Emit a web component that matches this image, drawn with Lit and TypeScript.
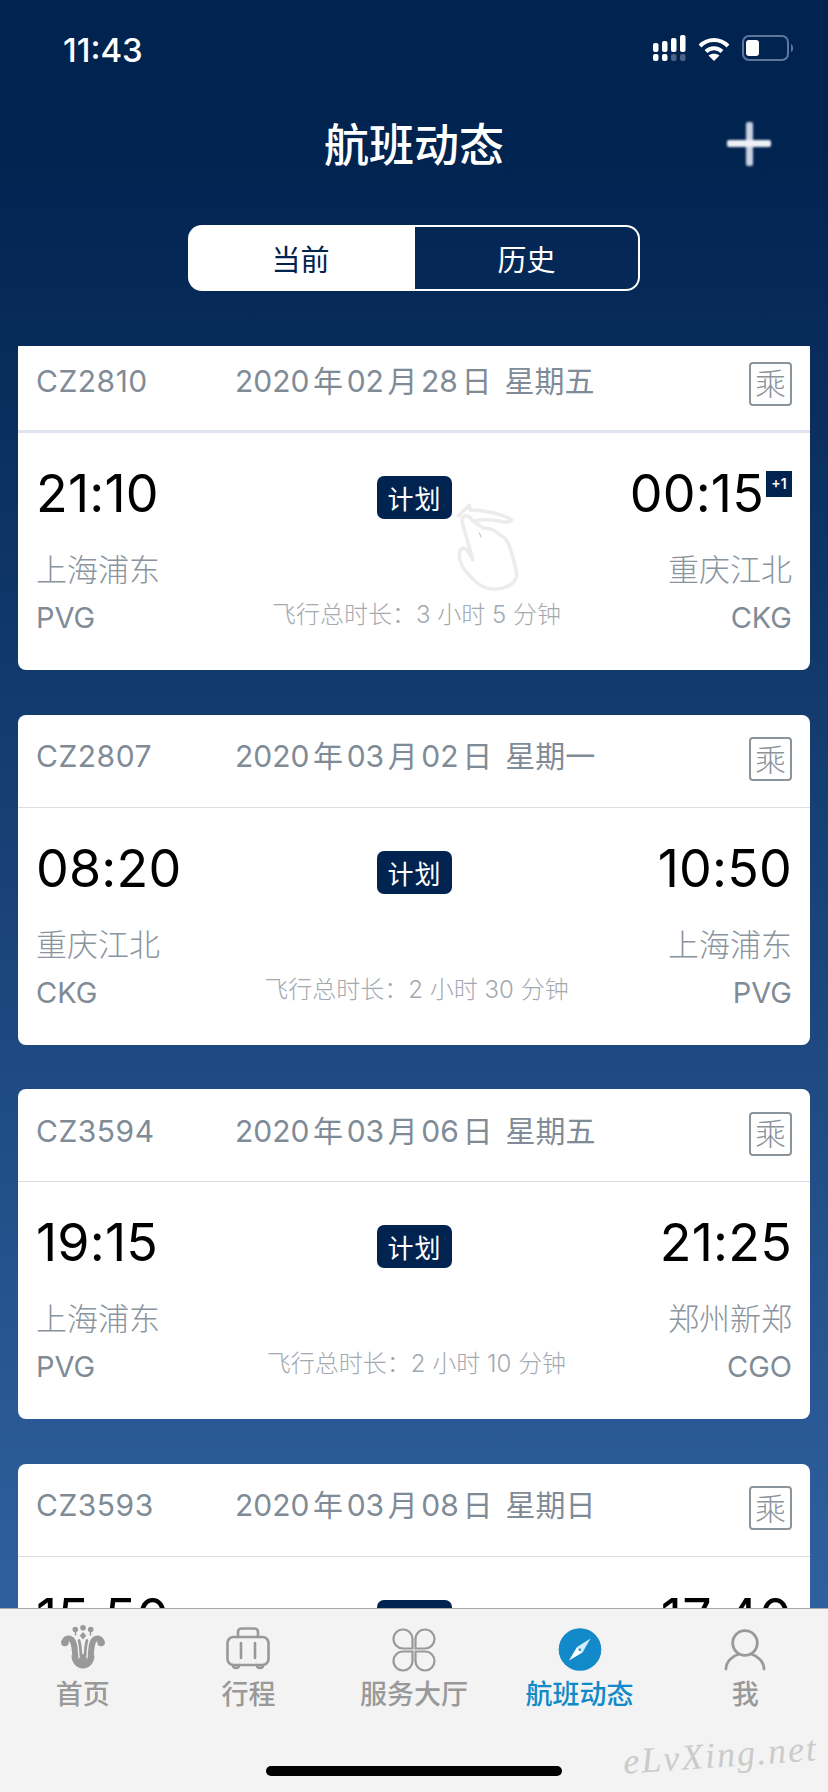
import { LitElement, html, css, svg } from "lit";
import { customElement } from "lit/decorators.js";

interface Flight {
  no: string; y: string; m: string; d: string; wk: string;
  dep: string; arr: string; from: string; fromCode: string; to: string; toCode: string;
  h: string; min: string; plus?: boolean;
}
const flights: Flight[] = [
  { no: "CZ2810", y: "2020", m: "02", d: "28", wk: "星期五", dep: "21:10", arr: "00:15", from: "上海浦东", fromCode: "PVG", to: "重庆江北", toCode: "CKG", h: "3", min: "5", plus: true },
  { no: "CZ2807", y: "2020", m: "03", d: "02", wk: "星期一", dep: "08:20", arr: "10:50", from: "重庆江北", fromCode: "CKG", to: "上海浦东", toCode: "PVG", h: "2", min: "30" },
  { no: "CZ3594", y: "2020", m: "03", d: "06", wk: "星期五", dep: "19:15", arr: "21:25", from: "上海浦东", fromCode: "PVG", to: "郑州新郑", toCode: "CGO", h: "2", min: "10" },
  { no: "CZ3593", y: "2020", m: "03", d: "08", wk: "星期日", dep: "15:50", arr: "17:40", from: "郑州新郑", fromCode: "CGO", to: "上海浦东", toCode: "PVG", h: "2", min: "10" },
];

const tabIcons = {
  home: svg`<svg viewBox="0 3 44 44" width="44" height="44" fill="#999">
    <circle cx="14.300" cy="4.500" r="2.800"/><circle cx="22" cy="2.700" r="2.800"/><circle cx="29.700" cy="4.500" r="2.800"/>
    <path d="M22 7l3.300 3.800-3.300 3.800-3.300-3.800z"/>
    <g fill="none" stroke="#999" stroke-linecap="round">
      <path d="M14.500 6V10M29.500 6V10" stroke-width="1.500"/>
      <path d="M4 17C4 13.500 8 12.500 10.500 14.500 14 17.500 13.500 25 14.500 33" stroke-width="6"/>
      <path d="M40 17C40 13.500 36 12.500 33.500 14.500 30 17.500 30.500 25 29.500 33" stroke-width="6"/>
      <path d="M18 15.500C19.500 20 19.500 26 20 31M26 15.500C24.500 20 24.500 26 24 31" stroke-width="2.800"/>
    </g>
    <circle cx="3.900" cy="17.500" r="3.800"/><circle cx="40.100" cy="17.500" r="3.800"/>
    <path d="M10.500 30L17 34.500 22 28.500 27 34.500 33.500 30C33.500 38 28.500 43.500 22 43.500S10.500 38 10.500 30Z"/>
  </svg>`,
  trip: svg`<svg viewBox="0 1 44 44" width="44" height="44" fill="none" stroke="#999" stroke-width="2.600" stroke-linejoin="round" stroke-linecap="round">
    <rect x="1.500" y="10" width="41" height="28" rx="6"/>
    <path d="M12 10V5C12 3 13.500 1.500 15.500 1.500H28.500C30.500 1.500 32 3 32 5V10"/>
    <path d="M15 16V31M29 16V31"/>
    <path d="M7 38c0 2 1 3 3 3s3-1 3-3M31 38c0 2 1 3 3 3s3-1 3-3"/>
  </svg>`,
  service: svg`<svg viewBox="0 0 44 44" width="44" height="44" fill="none" stroke="#999" stroke-width="2.200">
    <path d="M20.500 20.500H11A9.500 9.500 0 1 1 20.500 11Z"/>
    <path d="M23.500 20.500H33A9.500 9.500 0 1 0 23.500 11Z"/>
    <path d="M20.500 23.500H11A9.500 9.500 0 1 0 20.500 33Z"/>
    <path d="M23.500 23.500H33A9.500 9.500 0 1 1 23.500 33Z"/>
  </svg>`,
  flight: svg`<svg viewBox="0 0 44 44" width="44" height="44">
    <circle cx="22" cy="21.500" r="21.300" fill="#1289c9"/>
    <path d="M32.500 10.500L19 19 24.500 24.500Z" fill="#d5ecf8"/>
    <path d="M11 32.500L19 19 24.500 24.500Z" fill="#fff"/>
    <circle cx="21.800" cy="21.700" r="1.200" fill="#1289c9"/>
  </svg>`,
  me: svg`<svg viewBox="0 0 44 44" width="44" height="44" fill="none" stroke="#999" stroke-width="2.800" stroke-linecap="round">
    <circle cx="22" cy="15" r="12.300"/>
    <path d="M3 41C3 34 9 28 16 26M41 41C41 34 35 28 28 26"/>
  </svg>`,
};

@customElement("flight-card")
class FlightCard extends LitElement {
  static properties = { f: { attribute: false } };
  declare f: Flight;
  static styles = css`
    :host { display: block; flex: none; }
    .card { height: 330px; background: #fff; border-radius: 8px; box-sizing: border-box; position: relative; }
    .head { height: 93px; box-sizing: border-box; border-bottom: 1px solid #d8dee4; padding: 0 18px; display: grid; grid-template-columns: 199px 1fr 44px; align-items: center; color: #7f8b96; font-size: 30px; }
    :host(:first-child) .head { border-bottom: 3px solid #dfe4f0; }
    .no { line-height: 40px; padding-bottom: 9px; letter-spacing: .5px; }
    .date { line-height: 40px; padding-bottom: 9px; white-space: nowrap; word-spacing: 1px; }
    .date span { margin: 0 3.600px; }
    .cheng { width: 43px; height: 44px; margin: 0 0 3px 1px; box-sizing: border-box; border: 2px solid #8c949b; border-radius: 4px; display: flex; align-items: center; justify-content: center; font-size: 31px; color: #8c949b; font-weight: 300; line-height: 1; }
    .body { display: grid; grid-template-columns: 1fr auto 1fr; padding: 0 18px; position: relative; }
    .left { display: flex; flex-direction: column; }
    .right { display: flex; flex-direction: column; align-items: flex-end; }
    .time { font-size: 52px; line-height: 60px; margin-top: 31px; color: #000; display: flex; letter-spacing: .2px; }
    .plus { width: 26px; height: 26px; background: #012350; color: #fff; font-size: 14px; font-weight: 600; line-height: 26px; text-align: center; margin: 7px 0 0 2px; letter-spacing: 0; }
    .city { font-size: 31px; line-height: 40px; margin-top: 26px; color: #8a949e; font-weight: 300; }
    .code { font-size: 29px; line-height: 40px; margin-top: 8px; color: #7f8b96; }
    .mid { display: flex; flex-direction: column; align-items: center; padding-left: 1px; }
    .pill { margin-top: 43px; height: 43px; width: 75px; background: #012350; color: #fff; border-radius: 7px; font-size: 26px; display: flex; align-items: center; justify-content: center; letter-spacing: 1px; }
    .dur { margin: 80px 0 0 4px; font-size: 24px; line-height: 32px; color: #a3a9b0; white-space: nowrap; font-weight: 300; }
  `;
  render() {
    const f = this.f;
    return html`<div class="card">
      <div class="head">
        <div class="no">${f.no}</div>
        <div class="date">${f.y}<span>年</span>${f.m}<span>月</span>${f.d}<span>日</span> ${f.wk}</div>
        <div class="cheng">乘</div>
      </div>
      <div class="body">
        <div class="left">
          <div class="time">${f.dep}</div>
          <div class="city">${f.from}</div>
          <div class="code">${f.fromCode}</div>
        </div>
        <div class="mid">
          <div class="pill">计划</div>
          <div class="dur">飞行总时长：${f.h} 小时 ${f.min} 分钟</div>
        </div>
        <div class="right">
          <div class="time">${f.arr}${f.plus ? html`<div class="plus">+1</div>` : ""}</div>
          <div class="city">${f.to}</div>
          <div class="code">${f.toCode}</div>
        </div>
      </div>
    </div>`;
  }
}

@customElement("app-root")
class AppRoot extends LitElement {
  static styles = css`
    :host { display: block; width: 828px; height: 1792px; overflow: hidden; position: relative; font-family: Inter, "Noto Sans CJK SC", sans-serif; }
    .page { height: 1792px; display: flex; flex-direction: column; background: linear-gradient(180deg, #012350 0%, #012350 8%, #3568a8 100%); }
    .status { height: 92px; flex: none; display: flex; align-items: center; justify-content: space-between; padding: 4px 34px 0 63px; box-sizing: border-box; color: #fff; }
    .clock { font-weight: 500; font-size: 33px; line-height: 40px; margin-top: 3px; }
    .sys { display: flex; align-items: center; gap: 11px; }
    .title { height: 104px; flex: none; position: relative; display: flex; align-items: center; justify-content: center; color: #fff; font-size: 45px; font-weight: 500; padding-bottom: 4px; box-sizing: border-box; }
    .add { position: absolute; right: 57px; top: 30px; }
    .seg-wrap { flex: none; display: flex; justify-content: center; padding: 29px 0 55px; }
    .seg { width: 452px; height: 66px; display: grid; grid-template-columns: 227px 1fr; font-size: 29px; box-sizing: border-box; }
    .seg div { display: flex; align-items: center; justify-content: center; box-sizing: border-box; }
    .on { background: #fff; color: #012350; border-radius: 14px 0 0 14px; padding-right: 2px; }
    .off { border: 2px solid #fff; border-left: none; color: #fff; border-radius: 0 14px 14px 0; }
    .list { flex: 1; min-height: 0; overflow: hidden; position: relative; padding: 0 18px; }
    .inner { margin-top: -6px; display: flex; flex-direction: column; gap: 44.500px; }
    .hand { position: absolute; left: 455px; top: 154px; }
    .tabs { height: 184px; flex: none; background: #f3f3f3; border-top: 1px solid #a9a9a9; box-sizing: border-box; display: grid; grid-template-columns: repeat(5, 1fr); position: relative; }
    .tab { display: flex; flex-direction: column; align-items: center; padding-top: 19px; color: #999; font-size: 27px; font-weight: 500; }
    .tab svg { display: block; overflow: visible; }
    .tab span { margin-top: 4px; line-height: 38px; white-space: nowrap; }
    .tab.active { color: #1289c9; }
    .indicator { position: absolute; left: 266px; top: 157px; width: 296px; height: 10px; border-radius: 5px; background: #000; }
    .mark { position: absolute; left: 623px; top: 125px; font-family: "Liberation Serif", serif; font-style: italic; font-size: 36px; color: #cbcbcb; letter-spacing: 2px; transform: rotate(-4deg); white-space: nowrap; }
  `;
  render() {
    return html`<div class="page">
      <div class="status">
        <div class="clock">11:43</div>
        <div class="sys">
          <svg width="34" height="26" viewBox="0 0 34 26" fill="#fff">
            <rect x="0" y="8" width="5.500" height="9" rx="2"/><rect x="9" y="6" width="5.500" height="11" rx="2"/><rect x="18" y="3" width="5.500" height="14" rx="2"/><rect x="27" y="0" width="5.500" height="17" rx="2"/>
            <rect x="0" y="19" width="5.500" height="7" rx="2"/><rect x="9" y="19" width="5.500" height="7" rx="2"/><rect x="18" y="19" width="5.500" height="7" rx="2" fill="#4a6285"/><rect x="27" y="19" width="5.500" height="7" rx="2" fill="#4a6285"/>
          </svg>
          <svg width="32" height="26" viewBox="0 0 32 26" fill="none" stroke="#fff" stroke-width="4">
            <path d="M2 11C10 3 22 3 30 11"/><path d="M8 16.500C12.500 12 19.500 12 24 16.500"/>
            <path d="M16 26l-5.500-5.500C13.500 18 18.500 18 21.500 20.500Z" fill="#fff" stroke="none"/>
          </svg>
          <svg width="52" height="26" viewBox="0 0 52 26" style="margin-left:1px">
            <rect x="1" y="1" width="45" height="24" rx="6" fill="none" stroke="#5f779a" stroke-width="2"/>
            <rect x="4" y="5" width="13" height="16" rx="3" fill="#fff"/>
            <path d="M49 9c2.500 1 3 7 0 8z" fill="#5f779a"/>
          </svg>
        </div>
      </div>
      <div class="title">航班动态
        <svg class="add" width="44" height="44" viewBox="0 0 44 44" style="filter:blur(.8px)">
          <rect x="0" y="18" width="44" height="7" rx="2" fill="#eef1f6"/>
          <rect x="19" y="0" width="7" height="44" rx="2" fill="#c9d2e0"/>
          <rect x="19" y="18" width="7" height="7" fill="#eef1f6"/>
        </svg>
      </div>
      <div class="seg-wrap"><div class="seg"><div class="on">当前</div><div class="off">历史</div></div></div>
      <div class="list">
        <div class="inner">${flights.map((f) => html`<flight-card .f=${f}></flight-card>`)}</div>
        <svg class="hand" width="66" height="94" viewBox="0 0 66 94" fill="none" stroke="#ececec" stroke-width="3.500" stroke-linejoin="round" stroke-linecap="round">
          <path d="M3.300 16L14.300 5 15 10C30 10 48 14 56.700 20 56 22 54 22 50 22 40 20 28 19 19 21"/>
          <path d="M6.700 20C9 30 15 48 17.700 60 15 54 11 47 8.300 48 3 50 3 58 8.300 68 15 77 24 86 31.700 88 41 90 50 88 55 85 61 81 63 76 61 70 59 60 56 50 53 43 51 38 47 36 45 35 42 32 40 31 38 30 34 28 31 28 28 28L16.700 20C15 15 8 14 6.700 20Z"/>
          <path d="M24.500 33L26 37" stroke="#bbb" stroke-width="1"/>
        </svg>
      </div>
      <div class="tabs">
        <div class="tab">${tabIcons.home}<span>首页</span></div>
        <div class="tab">${tabIcons.trip}<span>行程</span></div>
        <div class="tab">${tabIcons.service}<span>服务大厅</span></div>
        <div class="tab active">${tabIcons.flight}<span>航班动态</span></div>
        <div class="tab">${tabIcons.me}<span>我</span></div>
        <div class="indicator"></div>
        <div class="mark">eLvXing.net</div>
      </div>
    </div>`;
  }
}
